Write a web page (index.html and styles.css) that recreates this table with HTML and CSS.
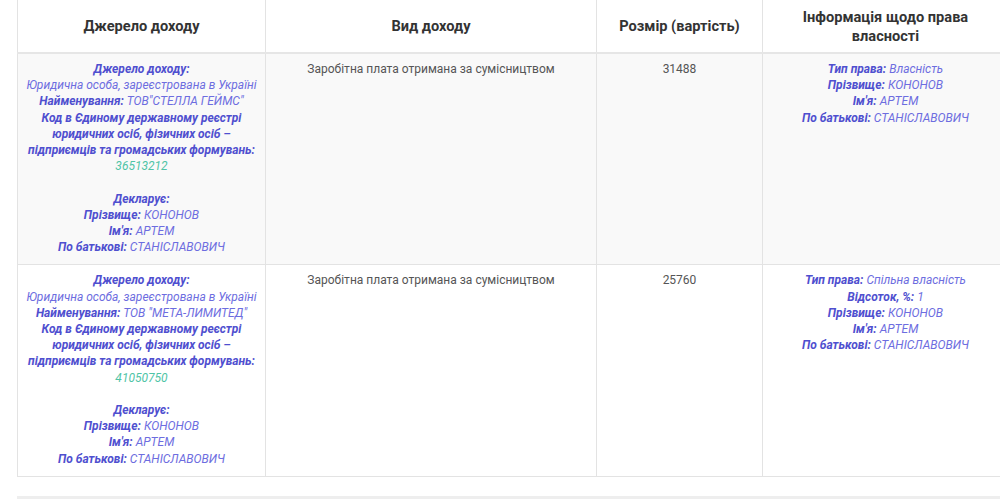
FILE: index.html
```html
<!DOCTYPE html>
<html lang="uk">
<head>
<meta charset="utf-8">
<title>Доходи</title>
<link rel="stylesheet" href="styles.css">
</head>
<body>
<div class="wrap">
  <table class="income">
    <colgroup>
      <col class="c1"><col class="c2"><col class="c3"><col class="c4">
    </colgroup>
    <thead>
      <tr>
        <th>Джерело доходу</th>
        <th>Вид доходу</th>
        <th>Розмір (вартість)</th>
        <th>Інформація щодо права власності</th>
      </tr>
    </thead>
    <tbody>
      <tr class="odd">
        <td class="info">
          <b>Джерело доходу:</b><br>
          <i>Юридична особа, зареєстрована в Україні</i><br>
          <b>Найменування:</b> <i>ТОВ"СТЕЛЛА ГЕЙМС"</i><br>
          <b>Код в Єдиному державному реєстрі юридичних осіб, фізичних осіб – підприємців та громадських формувань:</b><br>
          <i class="code">36513212</i><br><br>
          <b>Декларує:</b><br>
          <b>Прізвище:</b> <i>КОНОНОВ</i><br>
          <b>Ім'я:</b> <i>АРТЕМ</i><br>
          <b>По батькові:</b> <i>СТАНІСЛАВОВИЧ</i>
        </td>
        <td class="plain">Заробітна плата отримана за сумісництвом</td>
        <td class="plain">31488</td>
        <td class="info">
          <b>Тип права:</b> <i>Власність</i><br>
          <b>Прізвище:</b> <i>КОНОНОВ</i><br>
          <b>Ім'я:</b> <i>АРТЕМ</i><br>
          <b>По батькові:</b> <i>СТАНІСЛАВОВИЧ</i>
        </td>
      </tr>
      <tr class="even">
        <td class="info">
          <b>Джерело доходу:</b><br>
          <i>Юридична особа, зареєстрована в Україні</i><br>
          <b>Найменування:</b> <i>ТОВ "МЕТА-ЛИМИТЕД"</i><br>
          <b>Код в Єдиному державному реєстрі юридичних осіб, фізичних осіб – підприємців та громадських формувань:</b><br>
          <i class="code">41050750</i><br><br>
          <b>Декларує:</b><br>
          <b>Прізвище:</b> <i>КОНОНОВ</i><br>
          <b>Ім'я:</b> <i>АРТЕМ</i><br>
          <b>По батькові:</b> <i>СТАНІСЛАВОВИЧ</i>
        </td>
        <td class="plain">Заробітна плата отримана за сумісництвом</td>
        <td class="plain">25760</td>
        <td class="info">
          <b>Тип права:</b> <i>Спільна власність</i><br>
          <b>Відсоток, %:</b> <i>1</i><br>
          <b>Прізвище:</b> <i>КОНОНОВ</i><br>
          <b>Ім'я:</b> <i>АРТЕМ</i><br>
          <b>По батькові:</b> <i>СТАНІСЛАВОВИЧ</i>
        </td>
      </tr>
    </tbody>
  </table>
  <div class="footer-bar"></div>
</div>
</body>
</html>
```
FILE: styles.css
```css
html, body {
  margin: 0;
  padding: 0;
  overflow: hidden;
  background: #fff;
  font-family: Roboto, "Liberation Sans", sans-serif;
}

.wrap {
  padding-left: 17px;
  width: 991px;
}

.income {
  width: 991px;
  border-collapse: collapse;
  table-layout: fixed;
}

.c1 { width: 248px; }
.c2 { width: 331px; }
.c3 { width: 166px; }
.c4 { width: 246px; }

.income th {
  font-size: 14.6px;
  font-weight: 700;
  color: #333;
  line-height: 19px;
  padding: 7px 8px 6px;
  height: 39px;
  text-align: center;
  vertical-align: middle;
  border-left: 1px solid #e3e3e3;
  border-right: 1px solid #e3e3e3;
  border-bottom: 2px solid #e6e6e6;
}

.income td {
  font-size: 12px;
  line-height: 16.2px;
  padding: 7px 8px 9px;
  text-align: center;
  vertical-align: top;
  border: 1px solid #e3e3e3;
}

.income tr.odd td { background: #f9f9f9; }
.income tr.even td { background: #fff; }

.income td.plain {
  color: #555;
}

.info b {
  font-weight: 700;
  font-style: italic;
  color: #4f4fcf;
}

.info i {
  font-style: italic;
  color: #6d6de0;
}

.info i.code {
  color: #4fc4a6;
}

.footer-bar {
  margin-top: 19px;
  height: 10px;
  background: #eeeeee;
}
```
